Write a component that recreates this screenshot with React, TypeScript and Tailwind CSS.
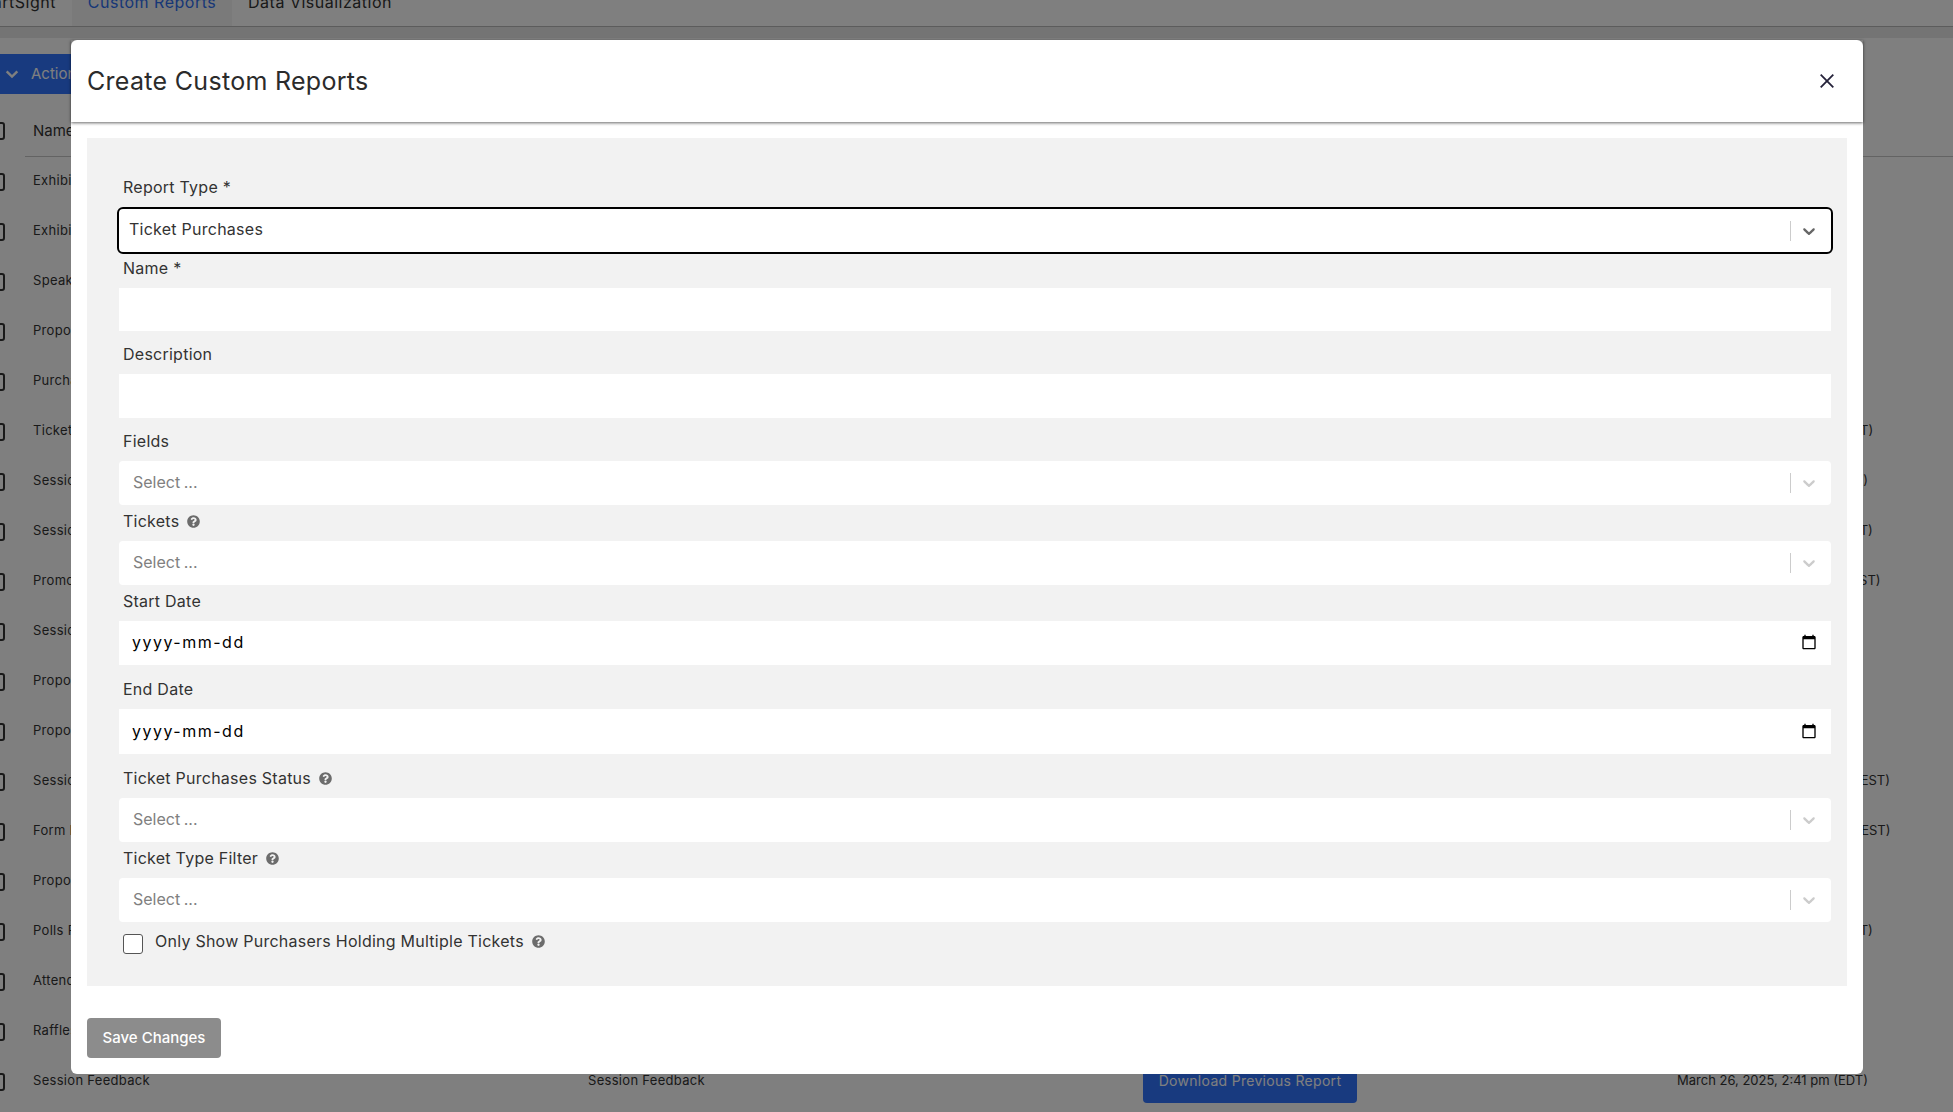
import React from 'react';
import { FaQuestionCircle } from 'react-icons/fa';

const rows = [
    { name: 'Exhibitor Booths', date: '' },
    { name: 'Exhibitor Leads', date: '' },
    { name: 'Speakers', date: '' },
    { name: 'Proposals', date: '' },
    { name: 'Purchases', date: '' },
    { name: 'Ticket Purchases', date: 'March 26, 2025, 12:41 pm (EDT)' },
    { name: 'Session Feedback', date: 'March 26, 2025, 2:41 pm (EDT)' },
    { name: 'Session Attendance', date: 'March 26, 2025, 10:41 am (EDT)' },
    { name: 'Promo Codes', date: 'January 14, 2025, 11:02 am (EST)' },
    { name: 'Session Details', date: '' },
    { name: 'Proposal Reviews', date: '' },
    { name: 'Proposal Scores', date: '' },
    { name: 'Session Ratings', date: 'November 12, 2024, 3:12 pm (EST)' },
    { name: 'Form Responses', date: 'November 12, 2024, 3:14 pm (EST)' },
    { name: 'Proposal Status', date: '' },
    { name: 'Polls Results', date: 'March 26, 2025, 10:41 am (EDT)' },
    { name: 'Attendees', date: '' },
    { name: 'Raffles', date: '' },
    { name: 'Session Feedback', date: 'March 26, 2025, 2:41 pm (EDT)' },
];

const Chevron = ({ className }: { className: string }) => (
    <svg viewBox="0 0 20 20" className={className} fill="currentColor">
        <path d="M4.516 7.548c0.436-0.446 1.043-0.481 1.576 0l3.908 3.747 3.908-3.747c0.533-0.481 1.141-0.446 1.576 0 0.436 0.445 0.408 1.197 0 1.615-0.406 0.418-4.695 4.502-4.695 4.502-0.217 0.223-0.502 0.335-0.789 0.335s-0.572-0.112-0.791-0.335c0 0-4.287-4.084-4.695-4.502s-0.436-1.17 0-1.615z" />
    </svg>
);

const Help = () => <FaQuestionCircle size={13} className="ml-[8px] mt-[1px] text-[#6c6c6c]" />;

const FieldLabel = ({ text, help, className }: { text: string; help?: boolean; className: string }) => (
    <div className={`flex h-6 items-center pl-1 text-[16px] tracking-[0.25px] text-[#333333] ${className}`}>
        {text}
        {help && <Help />}
    </div>
);

const SelectBox = ({ placeholder }: { placeholder: string }) => (
    <div className="flex h-11 items-center rounded-[4px] bg-white pb-[2px] pl-[14px] text-[16px] text-[#808080]">
        <span className="flex-1 [word-spacing:-1px]">{placeholder}</span>
        <span className="mt-[2px] h-5 w-px bg-[#cccccc]" />
        <span className="mt-[2px] flex w-10 justify-center pr-1 text-[#cccccc]">
            <Chevron className="h-5 w-5" />
        </span>
    </div>
);

const DateBox = ({ className }: { className: string }) => (
    <div className={`flex items-center justify-between bg-white pb-[2px] pl-[13px] pr-[14px] text-[16px] tracking-[1.5px] text-black ${className}`}>
        <span>yyyy-mm-dd</span>
        <svg viewBox="0 0 24 24" className="h-4 w-4" fill="currentColor">
            <path d="M20 3h-1V1h-2v2H7V1H5v2H4c-1.1 0-2 .9-2 2v16c0 1.1.9 2 2 2h16c1.1 0 2-.9 2-2V5c0-1.1-.9-2-2-2zm0 18H4V8h16v13z" />
        </svg>
    </div>
);

const App: React.FC = () => {
    return (
        <div className="relative h-screen w-screen overflow-hidden bg-white font-['Inter',sans-serif] text-[#333333]">
            <div className="-mt-[23px] flex h-[50px] items-stretch border-b border-[#b8b8b8] text-[16px] tracking-[0.5px]">
                <div className="flex w-[72px] items-center justify-end overflow-hidden pr-4 whitespace-nowrap">SmartSight</div>
                <div className="flex w-40 items-center justify-center bg-[#f4f4f4] text-[#2f6fef]">Custom Reports</div>
                <div className="flex w-44 items-center justify-center">Data Visualization</div>
            </div>
            <div className="h-[11px] bg-[#e8e8e8]" />

            <div className="mt-4 flex h-10 w-40 items-center gap-[11px] rounded-r-[4px] bg-[#3074ff] pl-[4px] text-[15px] text-white">
                <svg viewBox="0 0 24 24" className="h-4 w-4" fill="none" stroke="currentColor" strokeWidth="3.5">
                    <path d="M4 8l8 8 8-8" />
                </svg>
                Actions
            </div>

            <div className="flex h-[62px] items-center pt-[12px] text-[15px]">
                <span className="-ml-[13px] h-[18px] w-[18px] rounded-[3px] border-2 border-[#333333]" />
                <span className="ml-[28px]">Name</span>
            </div>
            <div className="ml-[25px] h-px bg-[#c6c6c6]" />

            {rows.map((row, i) => (
                <div key={i} className="flex h-[50px] items-center text-[13px] tracking-[0.3px] text-[#333333]">
                    <span className="-ml-[13px] h-[18px] w-[18px] shrink-0 rounded-[3px] border-2 border-[#333333]" />
                    <span className="mb-[2px] ml-[28px] w-[555px] shrink-0 whitespace-nowrap">{row.name}</span>
                    <span className="mb-[2px] w-[555px] shrink-0 whitespace-nowrap">{row.name}</span>
                    <span className="-mt-[1px] flex h-[42px] w-[214px] shrink-0 items-center justify-center rounded-[4px] bg-[#3074ff] pb-[2px] text-[14px] text-white">
                        Download Previous Report
                    </span>
                    <span className="mb-[2px] ml-[320px] whitespace-nowrap tracking-normal">{row.date}</span>
                </div>
            ))}

            <div className="absolute inset-0 bg-black/50" />

            <div className="absolute left-[71px] top-10 flex h-[1034px] w-[1792px] flex-col rounded-[6px] bg-white">
                <div className="flex h-[82px] shrink-0 items-center justify-between pl-4 pr-[29px] text-[25px] tracking-[0.3px] text-[#2b2b2b] shadow-[0_1px_3px_rgba(0,0,0,0.6)]">
                    <span className="pt-[1px]">Create Custom Reports</span>
                    <svg viewBox="0 0 14 14" className="h-[14px] w-[14px]" fill="none" stroke="#25223a" strokeWidth="1.8">
                        <path d="M0.7 0.7l12.6 12.6M13.3 0.7L0.7 13.3" />
                    </svg>
                </div>

                <div className="mx-4 mt-4 h-[848px] bg-[#f2f2f2] pb-8 pl-8 pr-4 pt-[37px]">
                    <FieldLabel text="Report Type *" className="mb-2" />
                    <div className="-mx-[2px] flex h-[47px] items-center rounded-[6px] border-2 border-black bg-white pb-[3px] pl-[10px] text-[16px] tracking-[0.25px] text-[#333333]">
                        <span className="flex-1">Ticket Purchases</span>
                        <span className="mt-[3px] h-5 w-px bg-[#cccccc]" />
                        <span className="mt-[3px] flex w-10 justify-center pr-1 text-[#666666]">
                            <Chevron className="h-5 w-5" />
                        </span>
                    </div>

                    <FieldLabel text="Name *" className="mb-2 mt-[2px] pb-[1px]" />
                    <input className="block h-[43px] w-full bg-white" />

                    <FieldLabel text="Description" className="mb-2 mt-[11px] pb-[1px]" />
                    <input className="block h-11 w-full bg-white" />

                    <FieldLabel text="Fields" className="mb-2 mt-[11px] pb-[1px]" />
                    <SelectBox placeholder="Select ..." />

                    <FieldLabel text="Tickets" help className="mb-2 mt-[4px] pb-[1px]" />
                    <SelectBox placeholder="Select ..." />

                    <FieldLabel text="Start Date" className="mb-2 mt-[4px] pb-[1px]" />
                    <DateBox className="h-11" />

                    <FieldLabel text="End Date" className="mb-2 mt-[12px] pb-[1px]" />
                    <DateBox className="h-[45px]" />

                    <FieldLabel text="Ticket Purchases Status" help className="mb-2 mt-[12px] pb-[1px]" />
                    <SelectBox placeholder="Select ..." />

                    <FieldLabel text="Ticket Type Filter" help className="mb-2 mt-[4px] pb-[1px]" />
                    <SelectBox placeholder="Select ..." />

                    <div className="mt-3 flex items-start pl-1">
                        <span className="h-5 w-5 rounded-[3px] border border-[#555555] bg-white" />
                        <div className="-mt-[5px] ml-3 flex h-6 items-center text-[16px] tracking-[0.25px] text-[#333333]">
                            Only Show Purchasers Holding Multiple Tickets
                            <Help />
                        </div>
                    </div>
                </div>

                <div className="ml-4 mt-8 flex h-10 w-[134px] items-center justify-center rounded-[4px] bg-[#8c8c8c] text-[15px] font-medium text-white">
                    Save Changes
                </div>
            </div>
        </div>
    );
};

export default App;
